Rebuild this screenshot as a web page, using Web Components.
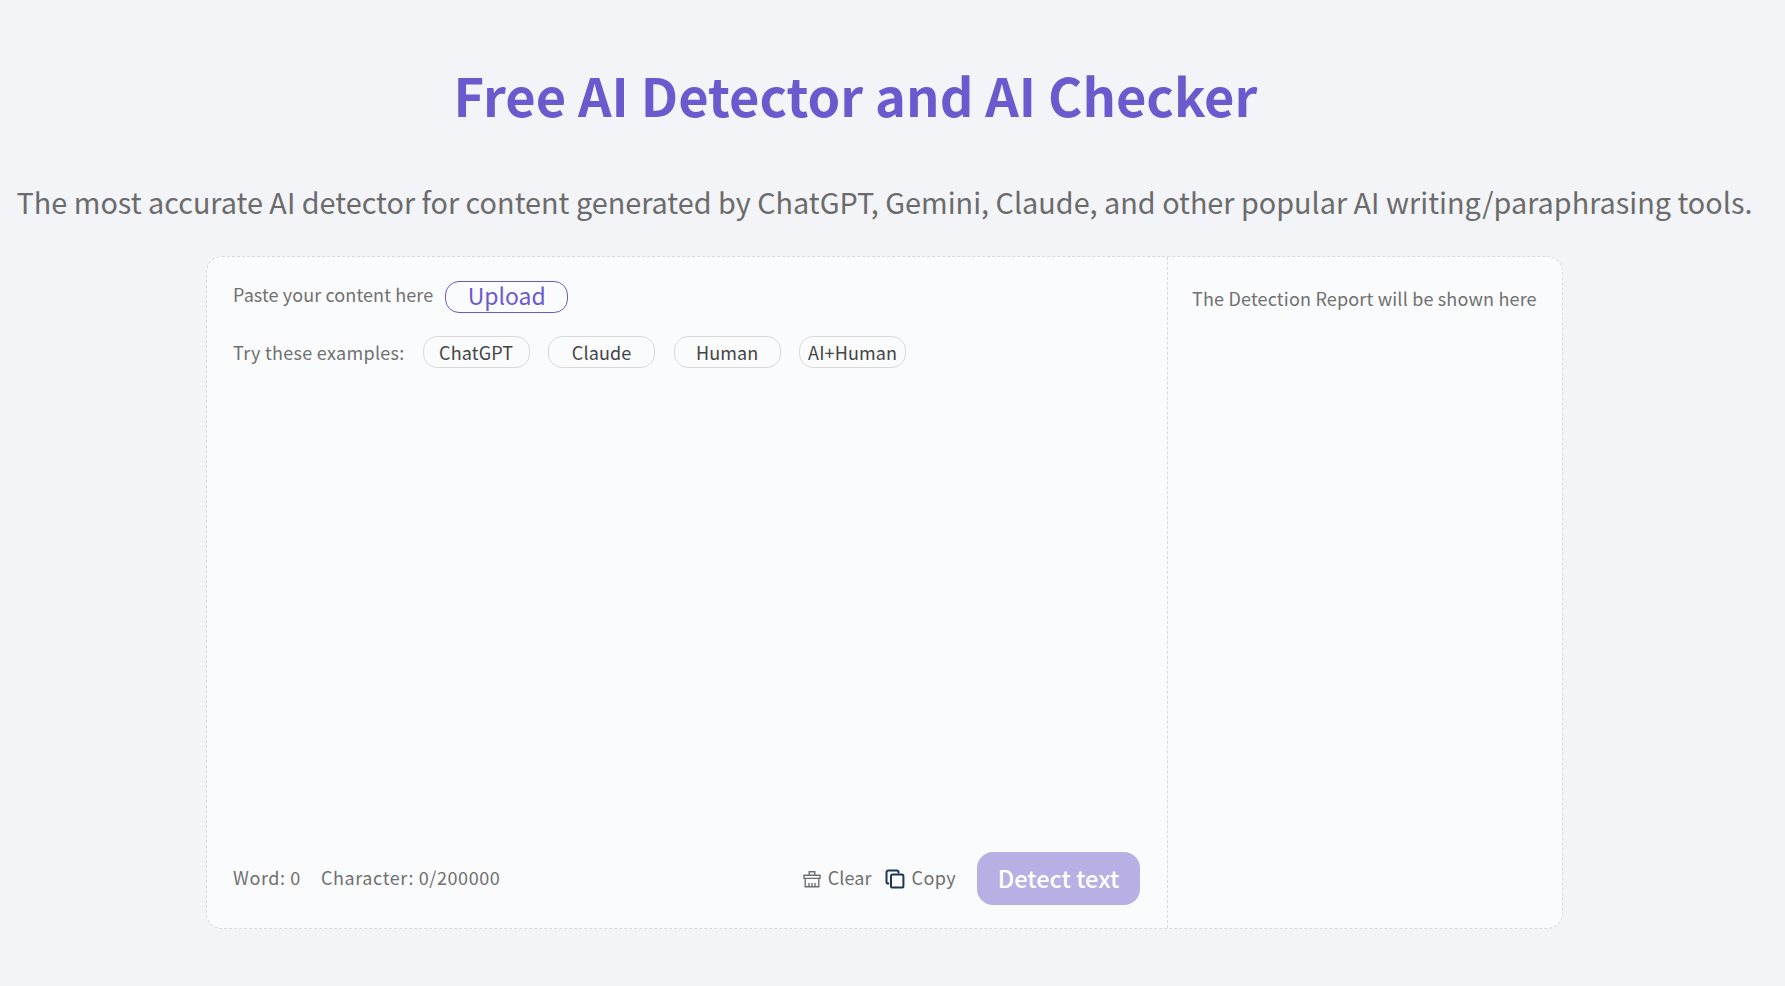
<!DOCTYPE html>
<html lang="en">
<head>
<meta charset="utf-8">
<title>Free AI Detector and AI Checker</title>
<style>
  html, body { margin: 0; padding: 0; }
  body {
    background: #f2f4f8;
    font-family: "Noto Sans CJK SC", "Noto Sans", sans-serif;
    height: 986px;
    overflow: hidden;
  }
</style>
</head>
<body>
<detector-page></detector-page>

<script>
class DetectorPage extends HTMLElement {
  constructor() {
    super();
    this.attachShadow({ mode: 'open' });
  }

  connectedCallback() {
    this.shadowRoot.innerHTML = `
      <style>
        :host {
          display: block;
          width: 1769px;
          padding-top: 60px;
        }
        h1 {
          margin: -2px 58px 0 0;
          font-size: 52.4px;
          line-height: 72px;
          font-weight: 700;
          color: #6a5acd;
          text-align: center;
        }
        p {
          margin: 49px 0 0;
          font-size: 28.8px;
          line-height: 46px;
          font-weight: 400;
          color: #6b6b6b;
          text-align: center;
          white-space: nowrap;
        }
        detector-panel {
          margin: 31px auto 0;
        }
      </style>
      <h1>Free AI Detector and AI Checker</h1>
      <p>The most accurate AI detector for content generated by ChatGPT, Gemini, Claude, and other popular AI writing/paraphrasing tools.</p>
      <detector-panel></detector-panel>
    `;
  }
}

class DetectorPanel extends HTMLElement {
  constructor() {
    super();
    this.attachShadow({ mode: 'open' });
  }

  connectedCallback() {
    this.shadowRoot.innerHTML = `
      <style>
        :host {
          display: grid;
          grid-template-columns: 961px 1fr;
          box-sizing: border-box;
          width: 1357px;
          height: 673px;
          background: #fafbfd;
          border: 1px dashed #d9d9d9;
          border-radius: 16px;
          font-size: 18px;
          color: #707070;
        }
        .left {
          display: flex;
          flex-direction: column;
          padding: 24px 27px 22px 26px;
          border-right: 1px dashed #d9d9d9;
          min-width: 0;
        }
        .row {
          display: flex;
          align-items: center;
        }
        .upload-row {
          gap: 12px;
          height: 32px;
        }
        .upload-row span {
          letter-spacing: 0.1px;
          position: relative;
          top: -3px;
        }
        .examples {
          margin-top: 23px;
          height: 32px;
        }
        .examples span {
          margin-right: 18px;
          letter-spacing: 0.3px;
        }
        .examples example-chip + example-chip { margin-left: 18.5px; }
        .spacer { flex: 1; }
        .foot {
          height: 53px;
          position: relative;
          top: -1px;
        }
        .foot .count {
          letter-spacing: 0.6px;
          position: relative;
          top: -2px;
        }
        .foot .count + .count { margin-left: 20px; }
        .actions {
          margin-left: auto;
          display: flex;
          align-items: center;
          position: relative;
          top: -2px;
        }
        action-link + action-link { margin-left: 13px; letter-spacing: 0.4px; }
        detect-button { margin-left: 21px; }
        .right {
          padding: 28px 24px;
          white-space: nowrap;
          letter-spacing: 0.17px;
        }
        svg { display: block; }
      </style>
      <div class="left">
        <div class="row upload-row">
          <span>Paste your content here</span>
          <upload-button>Upload</upload-button>
        </div>
        <div class="row examples">
          <span>Try these examples:</span>
          <example-chip>ChatGPT</example-chip>
          <example-chip>Claude</example-chip>
          <example-chip>Human</example-chip>
          <example-chip>AI+Human</example-chip>
        </div>
        <div class="spacer"></div>
        <div class="row foot">
          <span class="count">Word: 0</span>
          <span class="count">Character: 0/200000</span>
          <div class="actions">
            <action-link>
              <svg slot="icon" width="18" height="18" viewBox="0 0 18 18" fill="none" stroke="#6f6f6f" stroke-width="1.4">
                <path d="M6.2 5V1.8h5.6V5"/>
                <path d="M1 5.2h16v3.2H1z"/>
                <path d="M2.2 8.4v8.4h13.6V8.4"/>
                <path d="M6 13v3.8M9 13v3.8M12 13v3.8"/>
              </svg>
              Clear
            </action-link>
            <action-link>
              <svg slot="icon" width="20" height="20" viewBox="0 0 20 20" fill="none" stroke="#1f3557" stroke-width="2">
                <path d="M4.2 14.6H3.4A1.9 1.9 0 0 1 1.5 12.7V3.4A1.9 1.9 0 0 1 3.4 1.5h8.3a1.9 1.9 0 0 1 1.9 1.9v1"/>
                <rect x="6" y="5.6" width="12.4" height="12.9" rx="1.6"/>
              </svg>
              Copy
            </action-link>
          </div>
          <detect-button>Detect text</detect-button>
        </div>
      </div>
      <div class="right">The Detection Report will be shown here</div>
    `;
  }
}

class UploadButton extends HTMLElement {
  constructor() {
    super();
    this.attachShadow({ mode: 'open' });
    this.shadowRoot.innerHTML = `
      <style>
        :host {
          display: inline-flex;
          align-items: center;
          justify-content: center;
          box-sizing: border-box;
          width: 123px;
          height: 32px;
          padding-bottom: 3px;
          border: 1px solid #6a5acd;
          border-radius: 14px;
          color: #6a5acd;
          font-size: 23px;
          line-height: 1;
        }
      </style>
      <slot></slot>
    `;
  }
}

class ExampleChip extends HTMLElement {
  constructor() {
    super();
    this.attachShadow({ mode: 'open' });
    this.shadowRoot.innerHTML = `
      <style>
        :host {
          display: inline-flex;
          align-items: center;
          justify-content: center;
          box-sizing: border-box;
          width: 107px;
          height: 32px;
          border: 1px solid #d9d9d9;
          border-radius: 14px;
          color: #444;
          font-size: 18px;
          letter-spacing: 0.15px;
          line-height: 1;
          white-space: nowrap;
        }
      </style>
      <slot></slot>
    `;
  }
}

class ActionLink extends HTMLElement {
  constructor() {
    super();
    this.attachShadow({ mode: 'open' });
    this.shadowRoot.innerHTML = `
      <style>
        :host {
          display: inline-flex;
          align-items: center;
          gap: 7px;
          color: #707070;
          font-size: 18px;
          letter-spacing: 0.1px;
        }
        ::slotted(svg) {
          position: relative;
          top: 2px;
        }
      </style>
      <slot name="icon"></slot>
      <slot></slot>
    `;
  }
}

class DetectButton extends HTMLElement {
  constructor() {
    super();
    this.attachShadow({ mode: 'open' });
    this.shadowRoot.innerHTML = `
      <style>
        :host {
          display: inline-flex;
          align-items: center;
          justify-content: center;
          box-sizing: border-box;
          width: 163px;
          height: 53px;
          padding-bottom: 2px;
          border-radius: 16px;
          background: #b8b0e4;
          color: #fff;
          font-size: 23.6px;
          font-weight: 500;
        }
      </style>
      <slot></slot>
    `;
  }
}

customElements.define('detector-page', DetectorPage);
customElements.define('detector-panel', DetectorPanel);
customElements.define('upload-button', UploadButton);
customElements.define('example-chip', ExampleChip);
customElements.define('action-link', ActionLink);
customElements.define('detect-button', DetectButton);
</script>
</body>
</html>
